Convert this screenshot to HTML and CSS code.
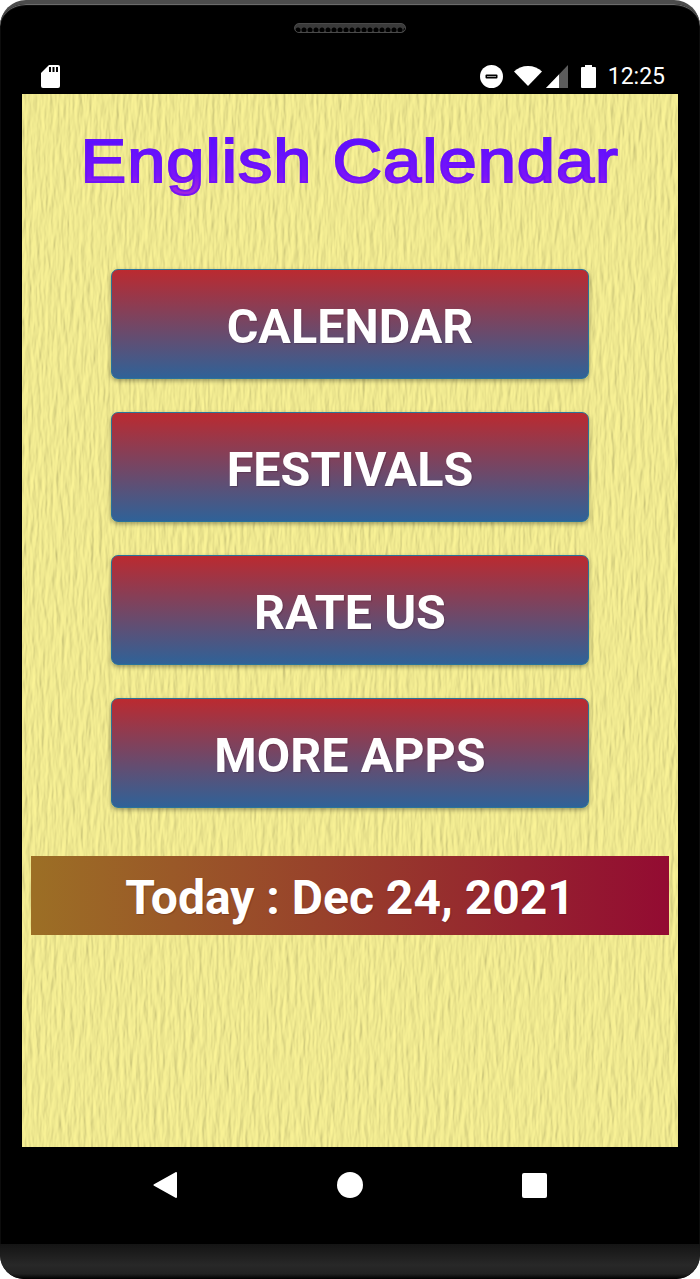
FILE: index.html
```html
<!DOCTYPE html>
<html lang="en">
<head>
    <meta charset="UTF-8">
    <meta name="viewport" content="width=device-width, initial-scale=1.0">
    <title>English Calendar</title>
    <link rel="stylesheet" href="styles.css">
</head>
<body>
    <div class="phone">
        <div class="speaker"></div>

        <div class="status-bar">
            <svg class="sd-icon" width="19" height="23" viewBox="0 0 19 23">
                <path fill="#fff" d="M8 0h9a2 2 0 0 1 2 2v19a2 2 0 0 1-2 2H2a2 2 0 0 1-2-2V8z"/>
                <path fill="#000" d="M8 2h2v5H8zM11.500 2h2v5h-2zM15 2h2v5h-2z"/>
            </svg>
            <div class="status-right">
                <svg class="dnd-icon" width="23" height="23" viewBox="0 0 23 23">
                    <circle cx="11.500" cy="11.500" r="11.500" fill="#fff"/>
                    <rect x="5.500" y="9.500" width="12" height="4" rx="1" fill="#000"/>
                    <rect x="7" y="11" width="9" height="1" fill="#999"/>
                </svg>
                <svg class="wifi-icon" width="28" height="20" viewBox="0 0 28 20">
                    <path fill="#fff" d="M14 20L0 5.500C3.500 2 8.500 0 14 0s10.500 2 14 5.500z"/>
                </svg>
                <svg class="signal-icon" width="22" height="23" viewBox="0 0 22 23">
                    <path fill="#5c5c5c" d="M22 0v23H0z"/>
                    <path fill="#fff" d="M13 9.500V23H0z"/>
                </svg>
                <svg class="battery-icon" width="15" height="23" viewBox="0 0 15 23">
                    <path fill="#fff" d="M4 2V0h7v2h3a1 1 0 0 1 1 1v19a1 1 0 0 1-1 1H1a1 1 0 0 1-1-1V3a1 1 0 0 1 1-1z"/>
                </svg>
                <span class="clock">12:25</span>
            </div>
        </div>

        <div class="screen">
            <svg class="paper" width="100%" height="100%">
                <filter id="paperGrain" x="0" y="0" width="100%" height="100%">
                    <feTurbulence type="fractalNoise" baseFrequency="0.24 0.04" numOctaves="3" seed="7"/>
                    <feDiffuseLighting surfaceScale="0.9" diffuseConstant="1.11" lighting-color="#f1ea91">
                        <feDistantLight azimuth="200" elevation="62"/>
                    </feDiffuseLighting>
                </filter>
                <rect width="100%" height="100%" filter="url(#paperGrain)"/>
            </svg>

            <h1 class="app-title">English Calendar</h1>

            <div class="menu">
                <a href="#" class="menu-button">CALENDAR</a>
                <a href="#" class="menu-button">FESTIVALS</a>
                <a href="#" class="menu-button">RATE US</a>
                <a href="#" class="menu-button">MORE APPS</a>
            </div>

            <div class="today-bar">Today : Dec 24, 2021</div>
        </div>

        <div class="nav-bar">
            <svg width="24" height="26" viewBox="0 0 24 26">
                <path fill="#fff" stroke="#fff" stroke-width="2" stroke-linejoin="round" d="M1.500 13L23 1v24z"/>
            </svg>
            <svg width="26" height="26" viewBox="0 0 26 26">
                <circle cx="13" cy="13" r="13" fill="#fff"/>
            </svg>
            <svg width="25" height="25" viewBox="0 0 25 25">
                <rect width="25" height="25" rx="2" fill="#fff"/>
            </svg>
        </div>

        <div class="chin"></div>
    </div>
</body>
</html>
```

FILE: styles.css
```css
* {
    margin: 0;
    padding: 0;
    box-sizing: border-box;
}

body {
    width: 700px;
    height: 1279px;
    background-color: white;
    overflow: hidden;
    font-family: Roboto, 'Liberation Sans', sans-serif;
}

.phone {
    position: relative;
    display: flex;
    flex-direction: column;
    width: 700px;
    height: 1279px;
    padding-top: 55px;
    background-color: black;
    border-radius: 26px 26px 24px 24px;
    border-top: 4px solid #4c4c4c;
    box-shadow: inset 0 1px 1px #777;
    overflow: hidden;
}

.speaker {
    position: absolute;
    top: 19px;
    left: 294px;
    width: 112px;
    height: 10px;
    background-color: #161616;
    background-image: radial-gradient(circle at 50% 60%, #000 2px, #3a3a3a 3px);
    background-size: 6px 10px;
    border: 1px solid #4a4a4a;
    border-radius: 5px;
}

.status-bar {
    display: flex;
    justify-content: space-between;
    align-items: center;
    height: 35px;
    padding: 0 35px 1px 41px;
    flex-shrink: 0;
}

.status-right {
    display: flex;
    align-items: center;
}

.wifi-icon {
    margin-left: 11px;
}

.signal-icon {
    margin-left: 4px;
}

.battery-icon {
    margin-left: 13px;
}

.clock {
    margin-left: 12px;
    color: white;
    font-size: 23px;
}

.screen {
    position: relative;
    display: flex;
    flex-direction: column;
    align-items: center;
    width: 656px;
    height: 1053px;
    margin: 0 0 0 22px;
    flex-shrink: 0;
    background-color: #f0e98f;
    overflow: hidden;
}

.paper {
    position: absolute;
    top: 0;
    left: 0;
}

.app-title {
    position: relative;
    margin-top: 31px;
    font-family: 'Liberation Sans', Arial, sans-serif;
    font-size: 62px;
    line-height: 72px;
    font-weight: 400;
    letter-spacing: 0.950px;
    color: transparent;
    -webkit-text-stroke: 1.800px rgba(104, 16, 250, 0.75);
    background: linear-gradient(to bottom, #5a10ff 20%, #7a14f8 70%, #a024e0 90%);
    -webkit-background-clip: text;
    background-clip: text;
    transform: scaleX(1.105);
}

.menu {
    position: relative;
    display: flex;
    flex-direction: column;
    gap: 33px;
    margin-top: 72px;
}

.menu-button {
    display: flex;
    align-items: center;
    justify-content: center;
    width: 478px;
    height: 110px;
    padding-top: 4px;
    color: white;
    font-size: 48.500px;
    font-weight: 700;
    text-decoration: none;
    text-shadow: 1px 1px 1px rgba(60, 30, 50, 0.35);
    background: linear-gradient(to bottom, #bb2a30, #2f6298);
    border: 1px solid #2a7399;
    border-radius: 7px;
    box-shadow: 0 2px 4px rgba(60, 60, 40, 0.45);
}

.today-bar {
    position: relative;
    display: flex;
    align-items: center;
    justify-content: center;
    width: 638px;
    height: 79px;
    margin-top: 48px;
    padding-top: 3px;
    color: white;
    font-size: 48px;
    font-weight: 700;
    text-shadow: 1px 1px 1px rgba(70, 20, 20, 0.3);
    background: linear-gradient(to right, #9c6f25, #930b32);
}

.nav-bar {
    display: flex;
    justify-content: space-between;
    align-items: center;
    width: 394px;
    height: 76px;
    margin-left: 153px;
    flex-shrink: 0;
}

.chin {
    position: absolute;
    left: 0;
    right: 0;
    bottom: 0;
    height: 35px;
    background: linear-gradient(to bottom, #141414, #282828 60%, #222 85%, #000);
    border-radius: 0 0 24px 24px;
}
```
